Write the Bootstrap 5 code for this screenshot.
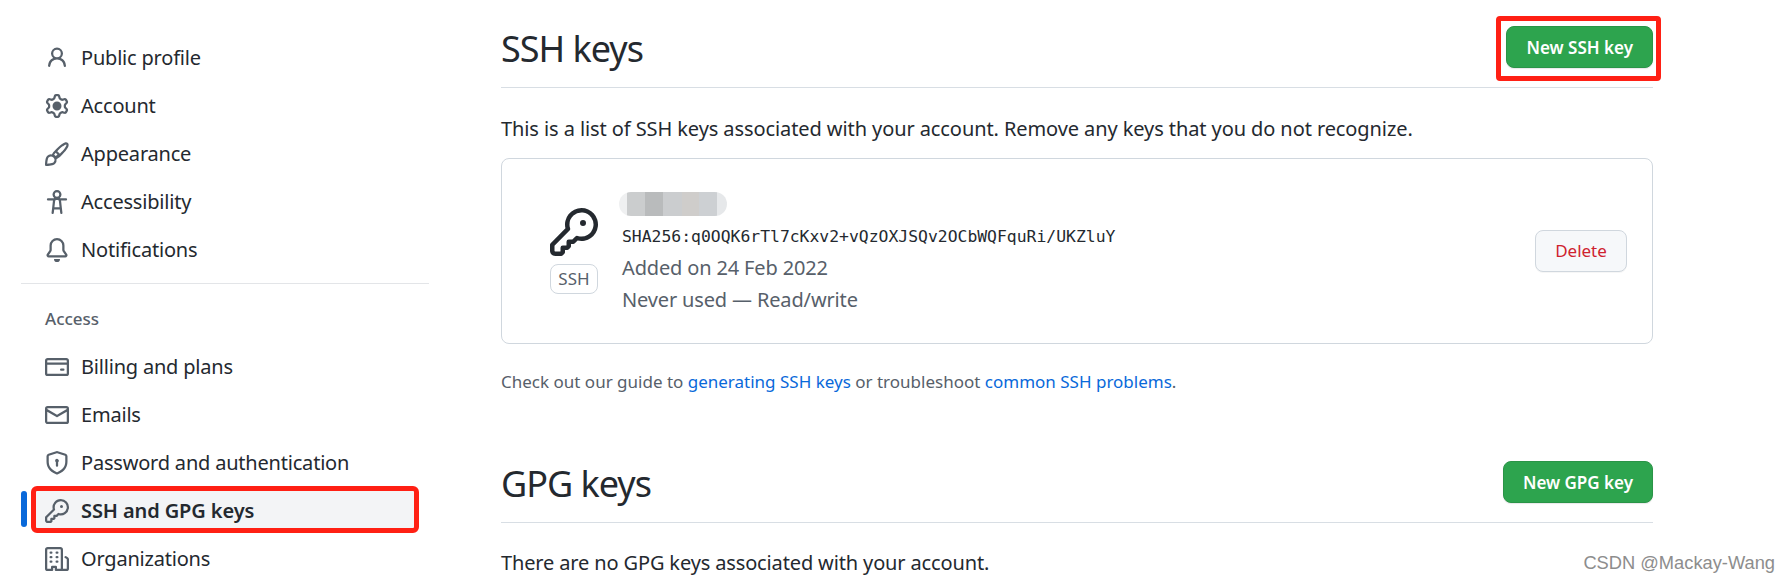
<!DOCTYPE html>
<html lang="en">
<head>
    <meta charset="UTF-8">
    <meta name="viewport" content="width=device-width, initial-scale=1.0">
    <title>SSH and GPG keys</title>
    <link href="https://cdn.jsdelivr.net/npm/bootstrap@5.3.0/dist/css/bootstrap.min.css" rel="stylesheet">
    <style>
        html, body {
            height: 583px;
            overflow: hidden;
        }

        body {
            background-color: #ffffff;
            color: #24292f;
            font-family: "Noto Sans", "Open Sans", sans-serif;
            font-size: 20px;
            letter-spacing: -0.2px;
            line-height: 30px;
        }

        .page-wrap {
            padding-left: 21px;
            padding-right: 137px;
            column-gap: 72px;
        }

        .side-col {
            width: 408px;
            flex-shrink: 0;
            padding-top: 34px;
        }

        .main-col {
            min-width: 0;
        }

        .side-link {
            height: 48px;
            padding-left: 9px;
            gap: 12px;
            color: #24292f;
            text-decoration: none;
            margin-right: 15px;
            margin-left: 15px;
            position: relative;
        }

        .side-link svg {
            width: 24px;
            height: 24px;
            fill: #57606a;
            flex-shrink: 0;
        }

        .side-link.is-current {
            background-color: #f3f4f6;
            font-weight: 600;
            letter-spacing: -0.1px;
            height: 37px;
            margin-top: 4px;
            margin-bottom: 7px;
            padding-top: 3px;
            outline: 5px solid #ff2014;
            border-radius: 1px;
        }

        .side-link.is-current::before {
            content: "";
            position: absolute;
            left: -15px;
            top: 0;
            bottom: 1px;
            width: 6px;
            border-radius: 6px;
            background-color: #0969da;
        }

        .side-rule {
            border-top: 1px solid #e3e5e8;
            margin: 9px 0 18px;
        }

        .side-label {
            font-size: 17px;
            font-weight: 500;
            letter-spacing: 0;
            color: #57606a;
            padding-left: 24px;
            height: 41px;
            line-height: 34px;
        }

        .head-row {
            border-bottom: 1px solid #d8dee4;
        }

        .head-ssh {
            height: 88px;
            padding-top: 26px;
        }

        .head-gpg {
            height: 81px;
            padding-top: 19px;
            margin-top: 45px;
        }

        .head-title {
            font-size: 36px;
            font-weight: 400;
            line-height: 46px;
            margin: 0;
            letter-spacing: -1px;
        }

        .green-btn {
            background-color: #2da44e;
            border: 1px solid #2a9447;
            color: #ffffff;
            font-size: 17px;
            font-weight: 600;
            letter-spacing: 0;
            line-height: 24px;
            height: 42px;
            padding: 9px 19px 7px;
            border-radius: 8px;
            box-shadow: 0 1px 1px rgba(27, 31, 36, .1);
        }

        .green-btn.is-framed {
            position: relative;
        }

        .green-btn.is-framed::after {
            content: "";
            position: absolute;
            top: -11px;
            left: -11px;
            right: -9px;
            bottom: -14px;
            border: 5px solid #ff2014;
            border-radius: 4px;
        }

        .intro-text {
            margin: 26px 0 14px;
            line-height: 30px;
            letter-spacing: -0.09px;
        }

        .key-box {
            height: 186px;
            border: 1px solid #d0d7de;
            border-radius: 8px;
            padding: 0 25px 0 48px;
        }

        .key-side {
            width: 48px;
            flex-shrink: 0;
            margin-right: 24px;
            padding-top: 49px;
        }

        .key-side svg {
            width: 48px;
            height: 48px;
            fill: #24292f;
            display: block;
        }

        .ssh-tag {
            display: block;
            border: 1px solid #d0d7de;
            border-radius: 8px;
            height: 30px;
            margin-top: 8px;
            font-size: 17px;
            letter-spacing: 0;
            line-height: 28px;
            text-align: center;
            color: #57606a;
        }

        .key-text {
            padding-top: 33px;
        }

        .key-name {
            width: 108px;
            height: 24px;
            border-radius: 12px;
            margin-left: -3px;
            margin-bottom: 8px;
            background: linear-gradient(90deg, #eff0f1 0, #eff0f1 7%, #cbcdce 7%, #cbcdce 24%, #b9bbbc 24%, #b9bbbc 41%, #cbcdcf 41%, #cbcdcf 58%, #cfcdcb 58%, #cfcdcb 74%, #cdd0d3 74%, #cdd0d3 91%, #e6e8ea 91%, #e6e8ea 100%);
        }

        .key-hash {
            font-family: "DejaVu Sans Mono", "Liberation Mono", monospace;
            font-size: 16.4px;
            line-height: 26px;
            letter-spacing: 0;
            color: #24292f;
            margin-bottom: 2px;
        }

        .key-meta {
            color: #57606a;
            line-height: 32px;
            letter-spacing: -0.15px;
        }

        .del-btn {
            background-color: #f6f8fa;
            border: 1px solid #d0d7de;
            color: #cf222e;
            font-size: 17px;
            font-weight: 400;
            letter-spacing: 0;
            line-height: 24px;
            width: 92px;
            height: 42px;
            padding: 8px 0;
            border-radius: 8px;
            box-shadow: 0 1px 0 rgba(27, 31, 36, .04);
        }

        .guide-text {
            font-size: 17px;
            letter-spacing: 0;
            color: #57606a;
            margin: 23px 0 0;
            line-height: 30px;
        }

        .guide-text a {
            color: #0969da;
            text-decoration: none;
        }

        .empty-text {
            margin: 25px 0 0;
            letter-spacing: -0.14px;
        }

        .watermark {
            position: absolute;
            right: 15px;
            top: 552px;
            font-family: "Liberation Sans", sans-serif;
            font-size: 18.3px;
            letter-spacing: 0;
            line-height: 22px;
            color: #8d8d8d;
        }
    </style>
</head>
<body>
<div class="page-wrap d-flex">
    <nav class="side-col">
        <a href="#" class="side-link d-flex align-items-center">
            <svg viewBox="0 0 16 16"><path d="M10.5 5a2.5 2.5 0 11-5 0 2.5 2.5 0 015 0zm.061 3.073a4 4 0 10-5.123 0 6.004 6.004 0 00-3.431 5.142.75.75 0 001.498.07 4.5 4.5 0 018.99 0 .75.75 0 101.498-.07 6.005 6.005 0 00-3.432-5.142z"/></svg>
            Public profile
        </a>
        <a href="#" class="side-link d-flex align-items-center">
            <svg viewBox="0 0 16 16"><path d="M7.429 1.525a6.593 6.593 0 011.142 0c.036.003.108.036.137.146l.289 1.105c.147.56.55.967.997 1.189.174.086.341.183.501.29.417.278.97.423 1.53.27l1.102-.303c.11-.03.175.016.195.046.219.31.41.641.573.989.014.031.022.11-.059.19l-.815.806c-.411.406-.562.957-.53 1.456a4.588 4.588 0 010 .582c-.032.499.119 1.05.53 1.456l.815.806c.08.08.073.159.059.19a6.494 6.494 0 01-.573.99c-.02.029-.086.074-.195.045l-1.103-.303c-.559-.153-1.112-.008-1.529.27-.16.107-.327.204-.5.29-.449.222-.851.628-.998 1.189l-.289 1.105c-.029.11-.101.143-.137.146a6.613 6.613 0 01-1.142 0c-.036-.003-.108-.037-.137-.146l-.289-1.105c-.147-.56-.55-.967-.997-1.189a4.502 4.502 0 01-.501-.29c-.417-.278-.97-.423-1.53-.27l-1.102.303c-.11.03-.175-.016-.195-.046a6.492 6.492 0 01-.573-.989c-.014-.031-.022-.11.059-.19l.815-.806c.411-.406.562-.957.53-1.456a4.587 4.587 0 010-.582c.032-.499-.119-1.05-.53-1.456l-.815-.806c-.08-.08-.073-.159-.059-.19a6.44 6.44 0 01.573-.99c.02-.029.086-.075.195-.045l1.103.303c.559.153 1.112.008 1.529-.27.16-.107.327-.204.5-.29.449-.222.851-.628.998-1.189l.289-1.105c.029-.11.101-.143.137-.146zM8 0c-.236 0-.47.01-.701.03-.743.065-1.29.615-1.458 1.261l-.29 1.106c-.017.066-.078.158-.211.224a5.994 5.994 0 00-.668.386c-.123.082-.233.09-.3.071L3.27 2.776c-.644-.177-1.392.02-1.82.63a7.977 7.977 0 00-.704 1.217c-.315.675-.111 1.422.363 1.891l.815.806c.05.048.098.147.088.294a6.084 6.084 0 000 .772c.01.147-.038.246-.088.294l-.815.806c-.474.469-.678 1.216-.363 1.891.2.428.436.835.704 1.218.428.609 1.176.806 1.82.63l1.103-.303c.066-.019.176-.011.299.071.213.143.436.272.668.386.133.066.194.158.212.224l.289 1.106c.169.646.715 1.196 1.458 1.26a8.094 8.094 0 001.402 0c.743-.064 1.29-.614 1.458-1.26l.29-1.106c.017-.066.078-.158.211-.224a5.98 5.98 0 00.668-.386c.123-.082.233-.09.3-.071l1.102.302c.644.177 1.392-.02 1.82-.63.268-.382.505-.789.704-1.217.315-.675.111-1.422-.364-1.891l-.814-.806c-.05-.048-.098-.147-.088-.294a6.1 6.1 0 000-.772c-.01-.147.039-.246.088-.294l.814-.806c.475-.469.679-1.216.364-1.891a7.992 7.992 0 00-.704-1.218c-.428-.609-1.176-.806-1.82-.63l-1.103.303c-.066.019-.176.011-.299-.071a5.991 5.991 0 00-.668-.386c-.133-.066-.194-.158-.212-.224L10.16 1.29C9.99.645 9.444.095 8.701.031A8.094 8.094 0 008 0zm1.5 8a1.5 1.5 0 11-3 0 1.5 1.5 0 013 0zM11 8a3 3 0 11-6 0 3 3 0 016 0z"/></svg>
            Account
        </a>
        <a href="#" class="side-link d-flex align-items-center">
            <svg viewBox="0 0 16 16"><path fill-rule="evenodd" d="M11.134 1.535c.7-.509 1.416-.942 2.076-1.155.649-.21 1.463-.267 2.069.34.603.601.568 1.411.368 2.07-.202.668-.624 1.39-1.125 2.096-1.011 1.424-2.496 2.987-3.775 4.249-1.098 1.084-2.132 1.839-3.04 2.3a3.744 3.744 0 01-1.055 3.217c-.431.431-1.065.691-1.657.861-.614.177-1.294.287-1.914.357A21.151 21.151 0 01.797 16H.743a.75.75 0 01-.743-.742v-.054a21.25 21.25 0 01.13-2.284c.067-.647.187-1.287.358-1.914.17-.591.43-1.226.86-1.657a3.746 3.746 0 013.227-1.054c.466-.893 1.225-1.907 2.314-2.982 1.271-1.255 2.833-2.75 4.245-3.777zM1.62 13.089c-.051.464-.086.929-.104 1.395.466-.018.932-.053 1.396-.104a10.511 10.511 0 001.668-.309c.526-.151.856-.325 1.011-.48a2.25 2.25 0 00-3.182-3.182c-.155.155-.329.485-.48 1.01a10.515 10.515 0 00-.309 1.67zm10.396-10.34c-1.224.89-2.605 2.189-3.822 3.384l1.718 1.718c1.21-1.205 2.51-2.597 3.387-3.833.47-.662.78-1.227.912-1.662.134-.444.032-.551.009-.575-.014-.014-.113-.113-.548.027-.432.14-.995.462-1.656.942zM7.12 7.2c-.417.462-.76.927-1.004 1.346.343.213.63.5.841.838.42-.24.89-.58 1.358-1.02L7.12 7.2z"/></svg>
            Appearance
        </a>
        <a href="#" class="side-link d-flex align-items-center">
            <svg viewBox="0 0 16 16"><path d="M9.923 5.302c.063.063.122.129.178.198H14A.75.75 0 0114 7h-3.3l.578 5.163.362 2.997a.75.75 0 01-1.49.18L9.868 13H6.132l-.282 2.34a.75.75 0 01-1.49-.18l.362-2.997L5.3 7H2a.75.75 0 010-1.5h3.9a2.54 2.54 0 01.176-.198 3 3 0 113.847 0zM9.2 7.073h-.001a.38.38 0 00-.3-.3c-.285-.05-.579-.073-.898-.073s-.613.023-.898.073a.38.38 0 00-.3.3L6.3 11.5h3.4L9.2 7.073zM9.5 3a1.5 1.5 0 10-3 0 1.5 1.5 0 003 0z"/></svg>
            Accessibility
        </a>
        <a href="#" class="side-link d-flex align-items-center">
            <svg viewBox="0 0 16 16"><path d="M8 16a2 2 0 001.985-1.75c.017-.137-.097-.25-.235-.25h-3.5c-.138 0-.252.113-.235.25A2 2 0 008 16z"/><path d="M8 1.5A3.5 3.5 0 004.5 5v2.947c0 .346-.102.683-.294.97l-1.703 2.556a.018.018 0 00-.003.01l.001.006c0 .002.002.004.004.006a.017.017 0 00.006.004l.007.001h10.964l.007-.001a.018.018 0 00.006-.004.016.016 0 00.004-.006l.001-.007a.017.017 0 00-.003-.01l-1.703-2.554a1.75 1.75 0 01-.294-.97V5A3.5 3.5 0 008 1.5zM3 5a5 5 0 0110 0v2.947c0 .05.015.098.042.139l1.703 2.555A1.518 1.518 0 0113.482 13H2.518a1.518 1.518 0 01-1.263-2.36l1.703-2.554A.25.25 0 003 7.947V5z"/></svg>
            Notifications
        </a>
        <div class="side-rule"></div>
        <div class="side-label">Access</div>
        <a href="#" class="side-link d-flex align-items-center">
            <svg viewBox="0 0 16 16"><path d="M10.75 9a.75.75 0 000 1.5h1.5a.75.75 0 000-1.5h-1.5z"/><path fill-rule="evenodd" d="M0 3.75C0 2.784.784 2 1.75 2h12.5c.966 0 1.75.784 1.75 1.75v8.5A1.75 1.75 0 0114.25 14H1.75A1.75 1.75 0 010 12.25v-8.5zm14.5 0a.25.25 0 00-.25-.25H1.75a.25.25 0 00-.25.25V5h13V3.75zm0 2.75h-13v5.75c0 .138.112.25.25.25h12.5a.25.25 0 00.25-.25V6.5z"/></svg>
            Billing and plans
        </a>
        <a href="#" class="side-link d-flex align-items-center">
            <svg viewBox="0 0 16 16"><path fill-rule="evenodd" d="M1.75 2A1.75 1.75 0 000 3.75v8.5C0 13.216.784 14 1.75 14h12.5A1.75 1.75 0 0016 12.25v-8.5A1.75 1.75 0 0014.25 2H1.75zM14.5 4.07v-.32a.25.25 0 00-.25-.25H1.75a.25.25 0 00-.25.25v.32L8 7.88l6.5-3.81zM1.5 5.809v6.441c0 .138.112.25.25.25h12.5a.25.25 0 00.25-.25V5.809L8.38 9.397a.75.75 0 01-.76 0L1.5 5.809z"/></svg>
            Emails
        </a>
        <a href="#" class="side-link d-flex align-items-center">
            <svg viewBox="0 0 16 16"><path fill-rule="evenodd" d="M7.467.133a1.75 1.75 0 011.066 0l5.25 1.68A1.75 1.75 0 0115 3.48V7c0 1.566-.32 3.182-1.303 4.682-.983 1.498-2.585 2.813-5.032 3.855a1.7 1.7 0 01-1.33 0c-2.447-1.042-4.049-2.357-5.032-3.855C1.32 10.182 1 8.566 1 7V3.48a1.75 1.75 0 011.217-1.667l5.25-1.68zm.61 1.429a.25.25 0 00-.153 0l-5.25 1.68a.25.25 0 00-.174.238V7c0 1.358.275 2.666 1.057 3.86.784 1.194 2.121 2.34 4.366 3.297a.2.2 0 00.154 0c2.245-.956 3.582-2.104 4.366-3.298C13.225 9.666 13.5 8.36 13.5 7V3.48a.25.25 0 00-.174-.237l-5.25-1.68zM9.25 6.5a1.25 1.25 0 01-.5 1v2.25a.75.75 0 01-1.5 0V7.5a1.25 1.25 0 112-1z"/></svg>
            Password and authentication
        </a>
        <a href="#" class="side-link is-current d-flex align-items-center">
            <svg viewBox="0 0 16 16"><path fill-rule="evenodd" d="M6.5 5.5a4 4 0 112.731 3.795.75.75 0 00-.768.18L7.44 10.5H6.25a.75.75 0 00-.75.75v1.19l-.06.06H4.25a.75.75 0 00-.75.75v1.19l-.06.06H1.75a.25.25 0 01-.25-.25v-1.69l5.024-5.023a.75.75 0 00.181-.768A3.995 3.995 0 016.5 5.5zm4-5.5a5.5 5.5 0 00-5.348 6.788L.22 11.72a.75.75 0 00-.22.53v2C0 15.216.784 16 1.75 16h2a.75.75 0 00.53-.22l.5-.5a.75.75 0 00.22-.53V14h.75a.75.75 0 00.53-.22l.5-.5a.75.75 0 00.22-.53V12h.75a.75.75 0 00.53-.22l.932-.932A5.5 5.5 0 1010.5 0zm.5 6a1 1 0 100-2 1 1 0 000 2z"/></svg>
            SSH and GPG keys
        </a>
        <a href="#" class="side-link d-flex align-items-center">
            <svg viewBox="0 0 16 16"><path fill-rule="evenodd" d="M1.5 14.25c0 .138.112.25.25.25H4v-1.25a.75.75 0 01.75-.75h2.5a.75.75 0 01.75.75v1.25h2.25a.25.25 0 00.25-.25V1.75a.25.25 0 00-.25-.25h-8.5a.25.25 0 00-.25.25v12.5zM1.75 16A1.75 1.75 0 010 14.25V1.75C0 .784.784 0 1.75 0h8.5C11.216 0 12 .784 12 1.75v12.5c0 .085-.006.168-.018.25h2.268a.25.25 0 00.25-.25V8.285a.25.25 0 00-.111-.208l-1.055-.703a.75.75 0 11.832-1.248l1.055.703c.487.325.779.871.779 1.456v5.965A1.75 1.75 0 0114.25 16h-3.5a.75.75 0 01-.197-.026c-.099.017-.2.026-.303.026h-3a.75.75 0 01-.75-.75V14h-1v1.25a.75.75 0 01-.75.75h-3zM3 3.75A.75.75 0 013.75 3h.5a.75.75 0 010 1.5h-.5A.75.75 0 013 3.75zM3.75 6a.75.75 0 000 1.5h.5a.75.75 0 000-1.5h-.5zM3 9.75A.75.75 0 013.75 9h.5a.75.75 0 010 1.5h-.5A.75.75 0 013 9.75zM7.75 9a.75.75 0 000 1.5h.5a.75.75 0 000-1.5h-.5zM7 6.75A.75.75 0 017.75 6h.5a.75.75 0 010 1.5h-.5A.75.75 0 017 6.75zM7.75 3a.75.75 0 000 1.5h.5a.75.75 0 000-1.5h-.5z"/></svg>
            Organizations
        </a>
    </nav>

    <main class="main-col flex-grow-1">
        <div class="head-row head-ssh d-flex justify-content-between">
            <h2 class="head-title">SSH keys</h2>
            <button class="btn green-btn is-framed" type="button">New SSH key</button>
        </div>
        <p class="intro-text">This is a list of SSH keys associated with your account. Remove any keys that you do not recognize.</p>

        <div class="key-box d-flex align-items-center justify-content-between">
            <div class="d-flex align-self-start">
                <div class="key-side">
                    <svg viewBox="0 0 16 16"><path fill-rule="evenodd" d="M6.5 5.5a4 4 0 112.731 3.795.75.75 0 00-.768.18L7.44 10.5H6.25a.75.75 0 00-.75.75v1.19l-.06.06H4.25a.75.75 0 00-.75.75v1.19l-.06.06H1.75a.25.25 0 01-.25-.25v-1.69l5.024-5.023a.75.75 0 00.181-.768A3.995 3.995 0 016.5 5.5zm4-5.5a5.5 5.5 0 00-5.348 6.788L.22 11.72a.75.75 0 00-.22.53v2C0 15.216.784 16 1.75 16h2a.75.75 0 00.53-.22l.5-.5a.75.75 0 00.22-.53V14h.75a.75.75 0 00.53-.22l.5-.5a.75.75 0 00.22-.53V12h.75a.75.75 0 00.53-.22l.932-.932A5.5 5.5 0 1010.5 0zm.5 6a1 1 0 100-2 1 1 0 000 2z"/></svg>
                    <span class="ssh-tag">SSH</span>
                </div>
                <div class="key-text">
                    <div class="key-name"></div>
                    <div class="key-hash">SHA256:q0OQK6rTl7cKxv2+vQzOXJSQv2OCbWQFquRi/UKZluY</div>
                    <div class="key-meta">Added on 24 Feb 2022</div>
                    <div class="key-meta">Never used — Read/write</div>
                </div>
            </div>
            <button class="btn del-btn" type="button">Delete</button>
        </div>

        <p class="guide-text">Check out our guide to <a href="#">generating SSH keys</a> or troubleshoot <a href="#">common SSH problems</a>.</p>

        <div class="head-row head-gpg d-flex justify-content-between">
            <h2 class="head-title">GPG keys</h2>
            <button class="btn green-btn" type="button">New GPG key</button>
        </div>
        <p class="empty-text">There are no GPG keys associated with your account.</p>
    </main>
</div>
<div class="watermark">CSDN @Mackay-Wang</div>
<script src="https://cdn.jsdelivr.net/npm/bootstrap@5.3.0/dist/js/bootstrap.bundle.min.js"></script>
</body>
</html>
